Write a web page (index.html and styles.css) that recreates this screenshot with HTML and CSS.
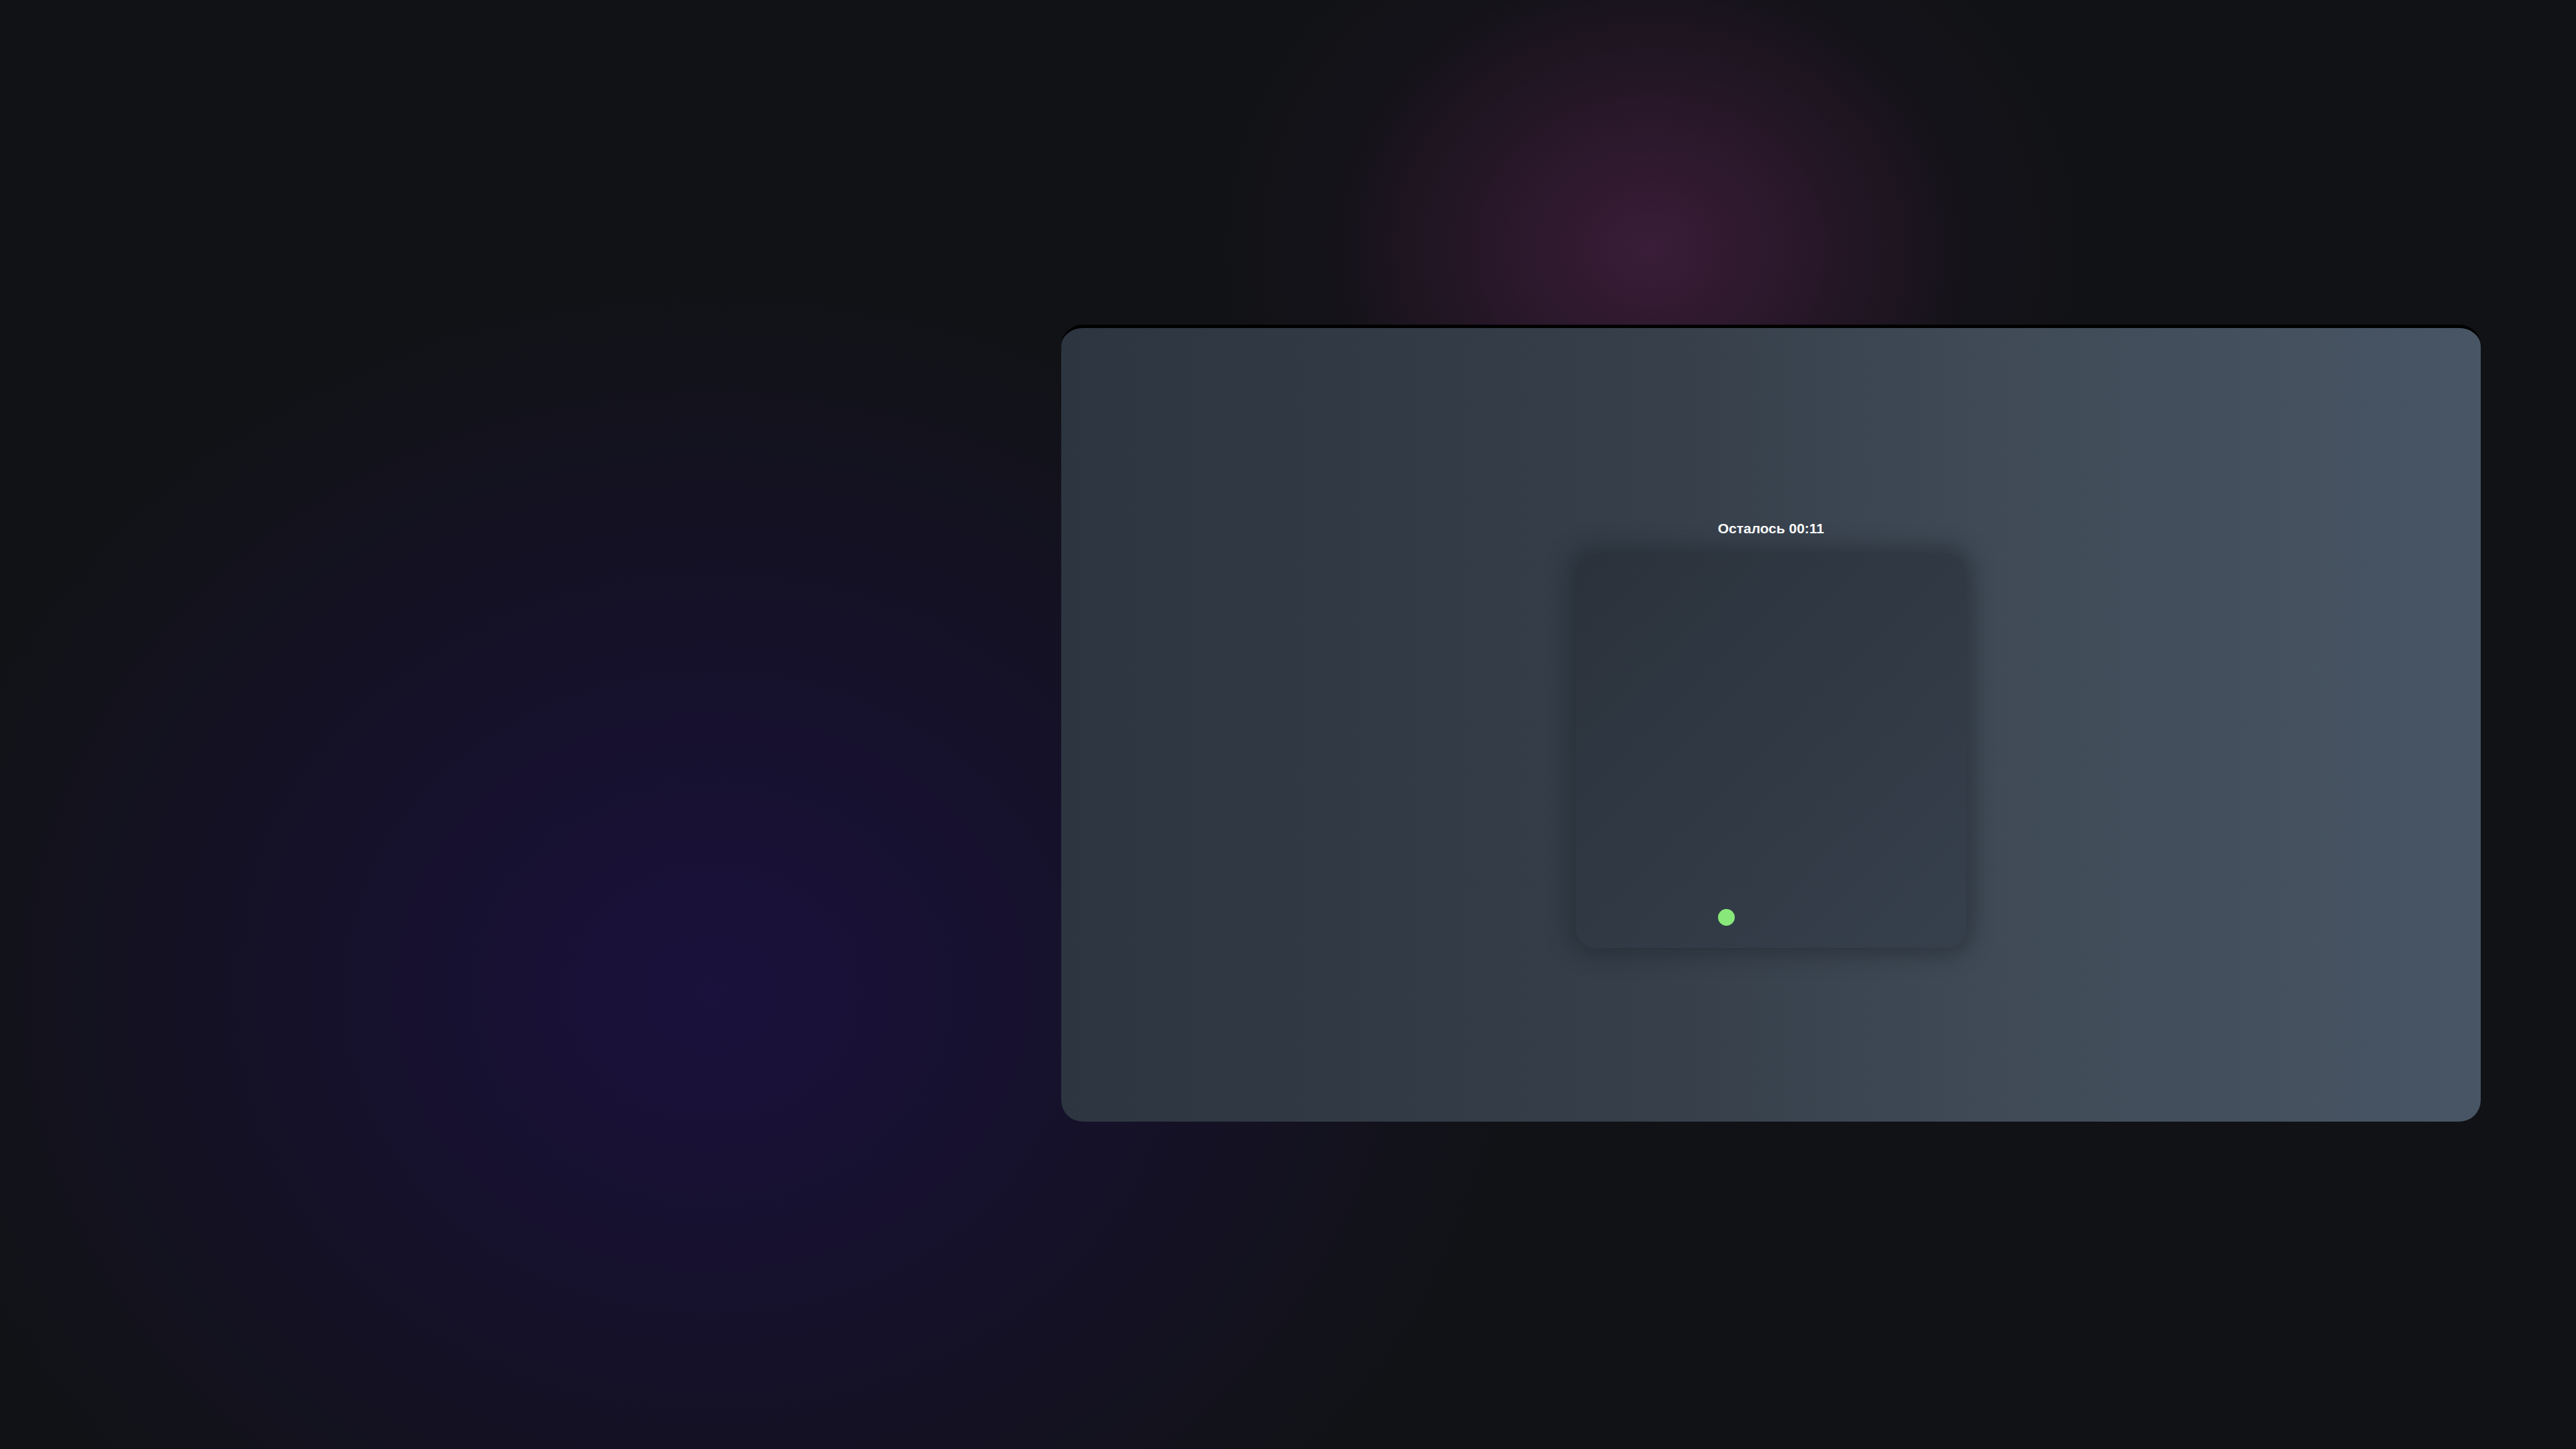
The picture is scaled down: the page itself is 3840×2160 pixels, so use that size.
FILE: index.html
```html
<!DOCTYPE html>
<html lang="ru">
<head>
<meta charset="utf-8">
<title>Timer</title>
<link rel="stylesheet" href="styles.css">
</head>
<body>
<div class="stage">
  <section class="panel">
    <div class="timer">Осталось 00:11</div>
    <div class="field">
      <span class="dot"></span>
    </div>
  </section>
</div>
</body>
</html>
```

FILE: styles.css
```css
html, body {
  margin: 0;
  padding: 0;
}
body {
  width: 3840px;
  height: 2160px;
  overflow: hidden;
  font-family: "Liberation Sans", Arial, sans-serif;
  background:
    radial-gradient(ellipse 640px 560px at 2460px 370px, rgba(58, 29, 56, 1) 0%, rgba(44, 24, 44, 0.8) 40%, rgba(26, 20, 30, 0.35) 75%, rgba(17, 18, 22, 0) 100%),
    radial-gradient(ellipse 1200px 1050px at 1060px 1480px, rgba(26, 17, 60, 1) 0%, rgba(24, 17, 52, 0.8) 40%, rgba(17, 18, 22, 0) 100%),
    #111216;
}
.stage {
  display: flex;
  padding: 484px 0 0 1582px;
}
.panel {
  width: 2116px;
  height: 1183px;
  border-top: 5px solid #000;
  border-radius: 32px;
  background: linear-gradient(90deg, #2d3640 0%, #353e49 40%, #3f4a56 65%, #485564 100%);
  display: flex;
  flex-direction: column;
  align-items: center;
  box-sizing: content-box;
}
.timer {
  margin-top: 286px;
  color: #ffffff;
  font-weight: 700;
  font-size: 21px;
  line-height: 26px;
}
.field {
  position: relative;
  margin-top: 24px;
  width: 582px;
  height: 588px;
  border-radius: 30px;
  background: linear-gradient(135deg, #2b323c 0%, #303944 50%, #36404c 100%);
  box-shadow: 0 0 30px 10px rgba(30, 36, 44, 0.5);
}
.dot {
  position: absolute;
  left: 212px;
  top: 530px;
  width: 25px;
  height: 25px;
  border-radius: 50%;
  background: #88e879;
}
```
